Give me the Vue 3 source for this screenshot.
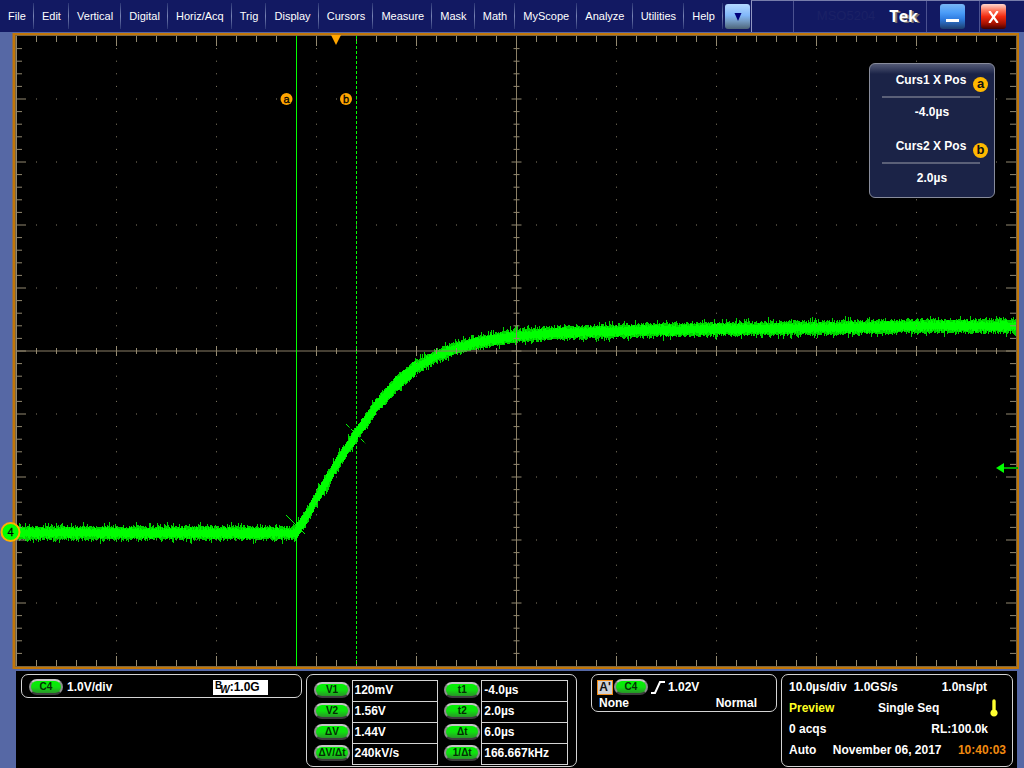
<script setup>
const menus = ['File', 'Edit', 'Vertical', 'Digital', 'Horiz/Acq', 'Trig', 'Display', 'Cursors', 'Measure', 'Mask', 'Math', 'MyScope', 'Analyze', 'Utilities', 'Help']

const measurements = [
  { vName: 'V1', v: '120mV', tName: 't1', t: '-4.0µs' },
  { vName: 'V2', v: '1.56V', tName: 't2', t: '2.0µs' },
  { vName: 'ΔV', v: '1.44V', tName: 'Δt', t: '6.0µs' },
  { vName: 'ΔV/Δt', v: '240kV/s', tName: '1/Δt', t: '166.667kHz' },
]

const cursors = [
  { title: 'Curs1 X Pos', value: '-4.0µs', mark: 'a' },
  { title: 'Curs2 X Pos', value: '2.0µs', mark: 'b' },
]

// Graticule: 10 x 10 divisions in a 1000 x 630 space, five minor ticks each
const W = 1000
const H = 630
let ticks = ''
let dots = ''
for (let i = 1; i < 50; i++) {
  const x = i * 20 + 0.5
  const y = i * 12.6
  const major = i % 5 === 0
  const v = major ? 10 : 6
  const c = major ? 5 : 3
  ticks += `M${x} 0V${v}M${x} ${H}V${H - v}M${x} ${315 - c}V${315 + c}`
  ticks += `M0 ${y}H${v}M${W} ${y}H${W - v}M${500.5 - c} ${y}H${500.5 + c}`
}
for (let d = 1; d < 10; d++) {
  if (d === 5) continue
  for (let i = 1; i < 50; i++) {
    dots += `M${d * 100} ${i * 12.6}h1`
    if (i % 5) dots += `M${i * 20} ${d * 63}h1`
  }
}

// Step response of channel 4
const curve = [[0, 497], [279, 497], [284, 489], [294, 474], [300, 462], [314, 439], [320, 428], [330, 413], [340, 398], [350, 384], [360, 370], [380, 348], [400, 331], [420, 320], [440, 312], [460, 307], [480, 303], [500, 300], [540, 297], [600, 295], [700, 293], [800, 292], [900, 290], [1000, 290]]
function level(x) {
  let i = 0
  while (i < curve.length - 2 && curve[i + 1][0] < x) i++
  const [x0, y0] = curve[i]
  const [x1, y1] = curve[i + 1]
  return y0 + ((y1 - y0) * (x - x0)) / (x1 - x0)
}
let seed = 4711
function rnd() {
  seed = (seed * 16807) % 2147483647
  return seed / 2147483647
}
let noise = ''
let body = ''
for (let x = 1; x < W; x++) {
  const y = level(x)
  const steep = x > 279 && x < 400
  const base = steep ? 6 : 5
  const up = Math.round(y - base - rnd() * 3 - (rnd() > 0.86 ? 3 : 0))
  const down = Math.round(y + base + rnd() * 3 + (rnd() > 0.86 ? 3 : 0))
  const core = steep ? 5 : 3
  noise += `M${x + 0.5} ${up}V${down}`
  body += `M${x + 0.5} ${Math.round(y - core - rnd() * 3)}V${Math.round(y + core + rnd() * 3)}`
}
</script>

<template>
  <div class="app">
    <header class="bar">
      <nav class="menu">
        <button v-for="m in menus" :key="m" type="button" class="item">{{ m }}</button>
      </nav>
      <button type="button" class="key more" aria-label="More menus">
        <svg width="8" height="8" viewBox="0 0 8 8"><path d="M0.5 0h7L4 8z" fill="#00007c" /></svg>
      </button>
      <div class="title">
        <div class="cell blank"></div>
        <div class="cell brand"><span class="model">MSO5204</span><strong class="tek">Tek</strong></div>
        <div class="cell min">
          <button type="button" class="key minimise" aria-label="Minimise">
            <svg width="13" height="3" viewBox="0 0 13 3"><path d="M0 0h13v3H0z" fill="#fff" /></svg>
          </button>
        </div>
        <div class="cell end">
          <button type="button" class="key close" aria-label="Close">
            <svg width="11" height="12" viewBox="0 0 11 12"><path d="M1.3 0L9.7 12M9.7 0L1.3 12" stroke="#fff" stroke-width="2.2" fill="none" /></svg>
          </button>
        </div>
      </div>
    </header>

    <main class="stage">
      <svg class="plot" viewBox="0 0 1000 630" preserveAspectRatio="none">
        <path :d="noise" stroke="#00d400" />
        <path :d="body" stroke="#00ff00" />
        <g stroke="#938970">
          <path d="M0.5 0V630" />
          <path d="M500.5 0V630M0 315H1000" stroke="#8a7f66" />
          <path :d="ticks" />
          <path :d="dots" stroke="#857d66" />
        </g>
        <g stroke="#00ff00" fill="none">
          <path d="M280.5 0V630" />
          <path d="M340.5 0V630" stroke-dasharray="3 2" />
          <path d="M270 479L289 498" />
          <path d="M330 388L350 408M331 408L350 389" stroke-dasharray="5 2" />
          <path d="M986 432H1002" stroke="#00a400" stroke-width="2" />
        </g>
        <path d="M315 -1h10l-5 10z" fill="#ffa500" />
        <path d="M980 432l8-5v10z" fill="#00ff00" />
        <circle cx="270.5" cy="63" r="6" fill="#ffa500" />
        <circle cx="330" cy="63" r="6" fill="#ffa500" />
        <text x="270.5" y="67" class="flag">a</text>
        <text x="330" y="67" class="flag">b</text>
        <circle cx="-5.5" cy="496" r="9" fill="#00ff00" stroke="#ffb000" stroke-width="2" />
        <text x="-5.5" y="500" class="flag">4</text>
      </svg>

      <aside class="panel">
        <section v-for="c in cursors" :key="c.mark" class="cursor">
          <h2 class="name">{{ c.title }}<span class="mark">{{ c.mark }}</span></h2>
          <p class="value">{{ c.value }}</p>
        </section>
      </aside>
    </main>

    <footer class="readouts">
      <section class="box channel">
        <span class="pill">C4</span>
        <span class="scale">1.0V/div</span>
        <span class="bw"><sup>B</sup><sub>W</sub>:1.0G</span>
      </section>

      <section class="box measures">
        <table class="values">
          <tbody>
            <tr v-for="m in measurements" :key="m.vName">
              <th scope="row"><span class="pill">{{ m.vName }}</span></th>
              <td>{{ m.v }}</td>
              <th scope="row" class="second"><span class="pill">{{ m.tName }}</span></th>
              <td>{{ m.t }}</td>
            </tr>
          </tbody>
        </table>
      </section>

      <section class="box trigger">
        <div class="line source">
          <span class="event">A'</span>
          <span class="pill">C4</span>
          <svg class="edge" width="14" height="13" viewBox="0 0 14 13"><path d="M0 12h4l5-11h5" fill="none" stroke="#fff" stroke-width="2" /></svg>
          <span>1.02V</span>
        </div>
        <div class="line mode"><span>None</span><span>Normal</span></div>
      </section>

      <section class="box horizontal">
        <div class="line rate"><span>10.0µs/div</span><span>1.0GS/s</span><span class="right">1.0ns/pt</span></div>
        <div class="line state">
          <span class="preview">Preview</span><span class="single">Single Seq</span>
          <svg width="8" height="18" viewBox="0 0 8 18"><path d="M2.3 2a1.7 1.7 0 0 1 3.4 0v8.7a3.6 3.6 0 1 1-3.4 0z" fill="#ffff30" /></svg>
        </div>
        <div class="line acqs"><span>0 acqs</span><span>RL:100.0k</span></div>
        <div class="line date"><span>Auto</span><span>November 06, 2017</span><time class="clock">10:40:03</time></div>
      </section>
    </footer>
  </div>
</template>

<style>
body {
  background: #5668a5;
}
</style>

<style scoped>
.app {
  display: flex;
  flex-direction: column;
  min-height: 100vh;
  box-sizing: border-box;
  background: #5668a5;
  color: #fff;
  font: bold 12px/16px "Liberation Sans", Arial, sans-serif;
}
.app * {
  box-sizing: border-box;
}
button {
  font: inherit;
  color: inherit;
  border: 0;
  padding: 0;
  margin: 0;
  background: none;
}
.bar {
  display: flex;
  height: 32px;
  background: #121962;
  font-weight: normal;
  font-size: 11px;
}
.menu {
  display: flex;
  min-width: 723px;
}
.item {
  flex: 1 0 auto;
  height: 32px;
  padding: 0 8px;
  background: linear-gradient(#2a3474, #7883b4 50%, #2a3474) right 3px / 1px 26px no-repeat;
}
.key {
  display: flex;
  justify-content: center;
  align-items: center;
  width: 25px;
  height: 25px;
  border-radius: 3px;
}
.more {
  margin: 4px 1px 0 2px;
  background: linear-gradient(#b4d8ff, #82b8fa 45%, #7298c0 70%, #4d6478);
}
.title {
  display: flex;
  flex: 1;
  border-top: 1px solid #777dab;
  border-left: 1px solid #9297c2;
}
.cell {
  border-right: 1px solid #4b5290;
}
.blank {
  width: 42px;
}
.brand {
  flex: 1;
  display: flex;
  align-items: center;
  justify-content: flex-end;
  gap: 14px;
  padding: 0 8px 2px 0;
}
.model {
  color: #1b2166;
  font-size: 13px;
}
.tek {
  font: bold 16px/24px "Open Sans", "Noto Sans", sans-serif;
  text-shadow: 2px 1px 0 #77736f;
}
.min {
  width: 53px;
  padding: 3px 0 0 13px;
}
.minimise {
  align-items: flex-end;
  padding-bottom: 7px;
  background: linear-gradient(#78b6f4, #4a9cf8 35%, #2f7ce0 60%, #1d3e6e);
}
.end {
  width: 44px;
  padding: 3px 0 0 1px;
  border-right: 0;
}
.close {
  background: linear-gradient(#ffd8d0, #ff7a60 25%, #f22a10 50%, #a01000 80%, #400000);
}
.stage {
  position: relative;
  display: flex;
  flex: 1;
  min-height: 300px;
  margin: 1px 5px 2px 13px;
  padding: 1px;
  border: 2px solid #c17608;
  box-shadow: -1px 0 0 #8a6d58;
  background: #7b6642;
}
.plot {
  position: absolute;
  top: 1px;
  left: 1px;
  width: calc(100% - 2px);
  height: calc(100% - 2px);
  background: #000;
  overflow: visible;
}
.flag {
  font: 11px "Liberation Sans", Arial, sans-serif;
  text-anchor: middle;
  fill: #000;
  stroke: #000;
  stroke-width: 0.3;
}
.panel {
  position: absolute;
  top: 28px;
  right: 22px;
  width: 126px;
  padding: 8px 12px 11px;
  border: 1px solid #888c9c;
  border-radius: 6px;
  background: linear-gradient(#545a76, #1b2347 10px);
  text-align: center;
}
.cursor + .cursor {
  margin-top: 18px;
}
.name {
  position: relative;
  margin: 0 2px 0 0;
  padding-bottom: 8px;
  border-bottom: 2px solid #5b6078;
  font-size: 12px;
  line-height: 16px;
}
.mark {
  position: absolute;
  right: -8px;
  top: 5px;
  width: 15px;
  height: 15px;
  border-radius: 50%;
  background: #ffb800;
  color: #111;
  font-size: 13px;
  line-height: 14px;
}
.value {
  margin: 6px 0 0;
}
.readouts {
  display: grid;
  grid-template-columns: 285fr 285fr 190fr 232fr;
  align-items: start;
  min-height: 97px;
  margin: 0 7px 0 16px;
  padding: 3px 4px 0 5px;
  background: #000;
}
.box {
  border: 1px solid #d4d4d4;
  border-radius: 7px;
  white-space: nowrap;
}
.pill {
  display: inline-block;
  width: 36px;
  height: 16px;
  border: 2px solid #8e8e8e;
  border-top-color: #c4c4c4;
  border-bottom-color: #3c3c3c;
  border-radius: 8px;
  background: linear-gradient(#00f400, #10e010 50%, #289428);
  color: #042c04;
  font-size: 10px;
  line-height: 12px;
  text-align: center;
}
.channel {
  display: flex;
  align-items: center;
  height: 24px;
  margin-right: 4px;
  padding: 2px 33px 0 7px;
}
.channel .pill,
.trigger .pill {
  width: 34px;
}
.scale {
  flex: 1;
  margin-left: 4px;
}
.bw {
  display: flex;
  width: 55px;
  height: 15px;
  padding-left: 2px;
  background: #fff;
  color: #000;
  line-height: 15px;
}
.bw sup,
.bw sub {
  font-size: 10px;
  line-height: 11px;
  vertical-align: baseline;
}
.bw sub {
  margin-left: -2px;
  padding-top: 4px;
  font-style: italic;
}
.measures {
  margin-right: 14px;
  padding: 5px 8px 1px 7px;
}
.values {
  width: 100%;
  border-collapse: collapse;
  table-layout: fixed;
}
.values th {
  width: 38px;
  height: 21px;
  padding: 0 0 2px;
  text-align: left;
  vertical-align: middle;
  line-height: 0;
}
.values .second {
  width: 44px;
  padding-left: 6px;
}
.values td {
  height: 21px;
  padding: 0 2px 2px;
  border: 1px solid #d4d4d4;
  line-height: 16px;
}
.trigger {
  margin-right: 4px;
  padding: 4px 19px 0 5px;
}
.line {
  display: flex;
  align-items: center;
}
.event {
  width: 16px;
  height: 15px;
  margin-right: 1px;
  border: 1px solid #f08c18;
  background: #d0d0d4;
  color: #111;
  line-height: 13px;
  text-align: center;
}
.edge {
  margin: 0 3px;
}
.mode {
  justify-content: space-between;
  padding-left: 2px;
}
.horizontal {
  padding: 1px 6px 6px 7px;
}
.horizontal .line {
  height: 21px;
}
.rate {
  gap: 7px;
}
.right {
  margin-left: auto;
  margin-right: 19px;
}
.state {
  justify-content: space-between;
  padding-right: 8px;
}
.single {
  margin-right: 7px;
}
.preview {
  color: #ffff20;
}
.acqs {
  justify-content: space-between;
  padding-right: 18px;
}
.date {
  justify-content: space-between;
}
.clock {
  color: #f08a10;
}
</style>
